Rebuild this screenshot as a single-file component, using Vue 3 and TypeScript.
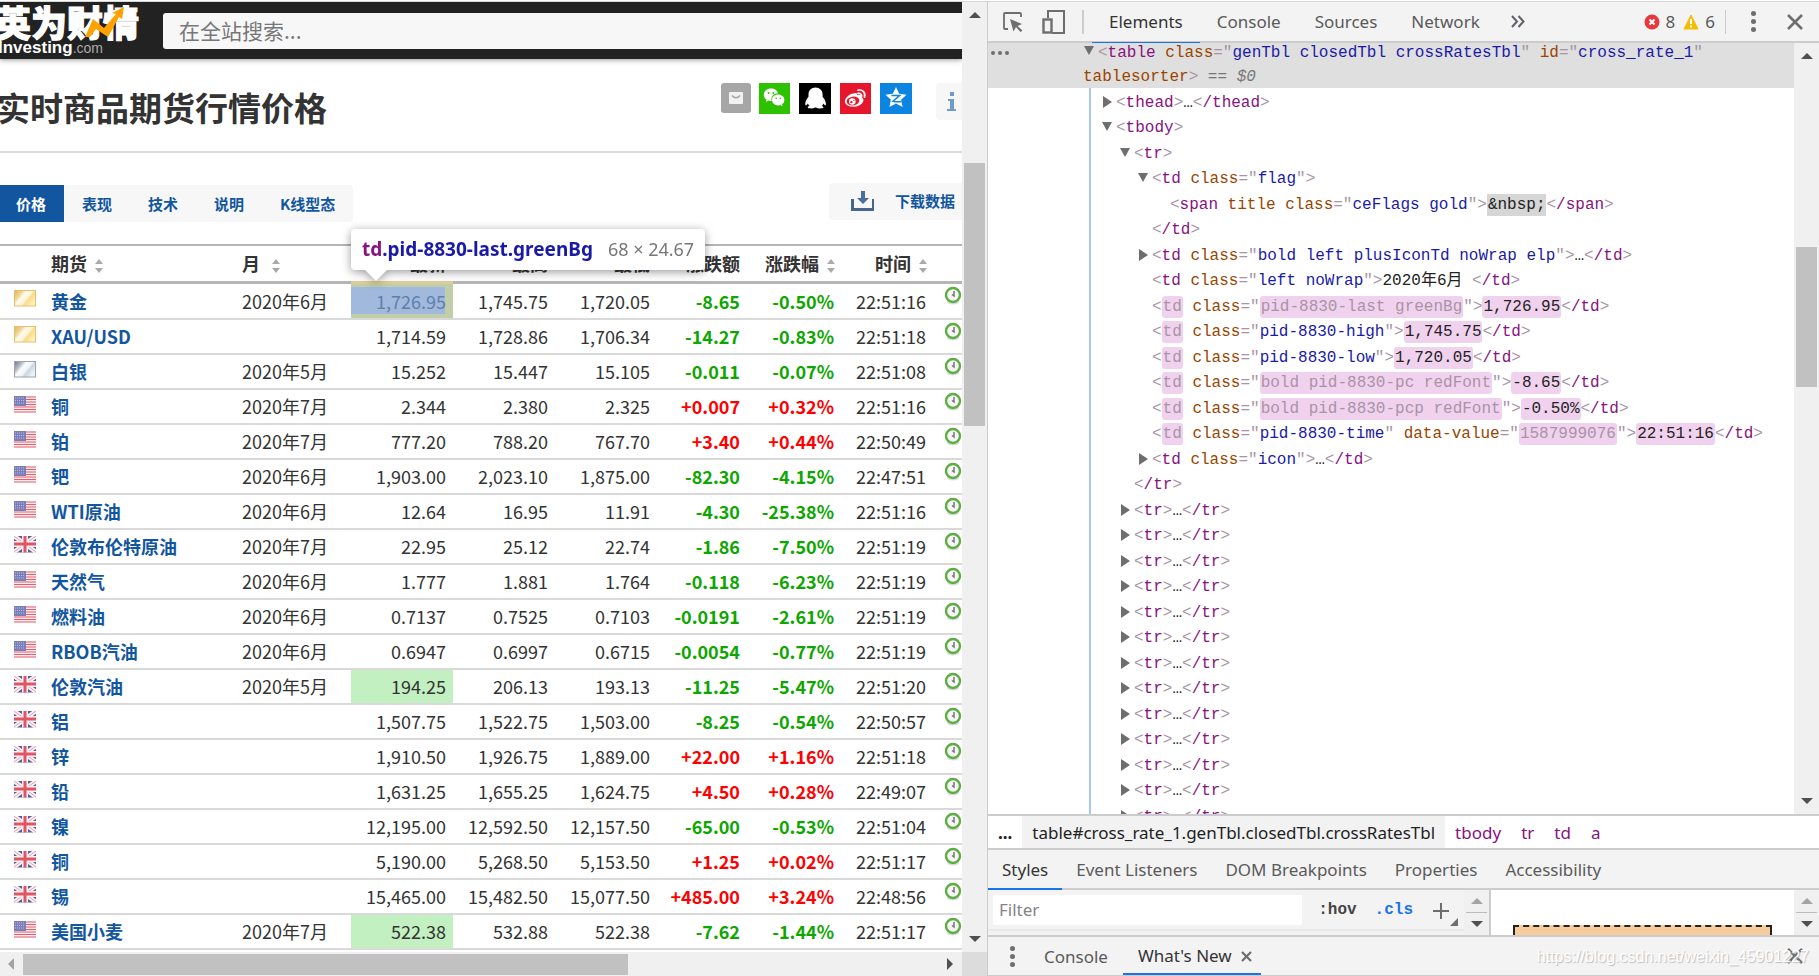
<script setup lang="ts">
interface Quote {
  flag: 'gold' | 'silver' | 'us' | 'uk'
  name: string
  month: string
  last: string
  high: string
  low: string
  chg: string
  pct: string
  time: string
  state?: 'inspected' | 'flash'
}

const q = (
  flag: Quote['flag'], name: string, month: string, last: string, high: string,
  low: string, chg: string, pct: string, time: string, state?: Quote['state'],
): Quote => ({ flag, name, month, last, high, low, chg, pct, time, state })

const quotes: Quote[] = [
  q('gold', '黄金', '2020年6月', '1,726.95', '1,745.75', '1,720.05', '-8.65', '-0.50%', '22:51:16', 'inspected'),
  q('gold', 'XAU/USD', '', '1,714.59', '1,728.86', '1,706.34', '-14.27', '-0.83%', '22:51:18'),
  q('silver', '白银', '2020年5月', '15.252', '15.447', '15.105', '-0.011', '-0.07%', '22:51:08'),
  q('us', '铜', '2020年7月', '2.344', '2.380', '2.325', '+0.007', '+0.32%', '22:51:16'),
  q('us', '铂', '2020年7月', '777.20', '788.20', '767.70', '+3.40', '+0.44%', '22:50:49'),
  q('us', '钯', '2020年6月', '1,903.00', '2,023.10', '1,875.00', '-82.30', '-4.15%', '22:47:51'),
  q('us', 'WTI原油', '2020年6月', '12.64', '16.95', '11.91', '-4.30', '-25.38%', '22:51:16'),
  q('uk', '伦敦布伦特原油', '2020年7月', '22.95', '25.12', '22.74', '-1.86', '-7.50%', '22:51:19'),
  q('us', '天然气', '2020年6月', '1.777', '1.881', '1.764', '-0.118', '-6.23%', '22:51:19'),
  q('us', '燃料油', '2020年6月', '0.7137', '0.7525', '0.7103', '-0.0191', '-2.61%', '22:51:19'),
  q('us', 'RBOB汽油', '2020年6月', '0.6947', '0.6997', '0.6715', '-0.0054', '-0.77%', '22:51:19'),
  q('uk', '伦敦汽油', '2020年5月', '194.25', '206.13', '193.13', '-11.25', '-5.47%', '22:51:20', 'flash'),
  q('uk', '铝', '', '1,507.75', '1,522.75', '1,503.00', '-8.25', '-0.54%', '22:50:57'),
  q('uk', '锌', '', '1,910.50', '1,926.75', '1,889.00', '+22.00', '+1.16%', '22:51:18'),
  q('uk', '铅', '', '1,631.25', '1,655.25', '1,624.75', '+4.50', '+0.28%', '22:49:07'),
  q('uk', '镍', '', '12,195.00', '12,592.50', '12,157.50', '-65.00', '-0.53%', '22:51:04'),
  q('uk', '铜', '', '5,190.00', '5,268.50', '5,153.50', '+1.25', '+0.02%', '22:51:17'),
  q('uk', '锡', '', '15,465.00', '15,482.50', '15,077.50', '+485.00', '+3.24%', '22:48:56'),
  q('us', '美国小麦', '2020年7月', '522.38', '532.88', '522.38', '-7.62', '-1.44%', '22:51:17', 'flash'),
]

const trend = (v: string) => (v.startsWith('+') ? 'up' : 'down')

/* Token kinds: p punctuation, t tag, a attribute, v value, x text,
   ht / hv / hx the same kinds flashed after a DOM mutation, s selected text */
type Token = [kind: string, text: string]
interface TreeRow {
  depth: number
  arrow?: 'open' | 'closed'
  tokens: Token[]
}

const close = (tag: string): Token[] => [['p', '<'], ['t', '/' + tag], ['p', '>']]
const attr = (name: string, value: string, kind = 'v'): Token[] => [
  ['a', ' ' + name], ['p', '="'], [kind, value], ['p', '"'],
]
const folded = (depth: number, tag: string, attrs: Token[] = []): TreeRow => ({
  depth, arrow: 'closed', tokens: [['p', '<'], ['t', tag], ...attrs, ['p', '>'], ['x', '…'], ...close(tag)],
})
const cell = (cls: string, clsKind: string, text: string, extra: Token[] = []): TreeRow => ({
  depth: 3,
  tokens: [['p', '<'], ['ht', 'td'], ...attr('class', cls, clsKind), ...extra, ['p', '>'], ['hx', text], ...close('td')],
})

const tree: TreeRow[] = [
  folded(1, 'thead'),
  { depth: 1, arrow: 'open', tokens: [['p', '<'], ['t', 'tbody'], ['p', '>']] },
  { depth: 2, arrow: 'open', tokens: [['p', '<'], ['t', 'tr'], ['p', '>']] },
  { depth: 3, arrow: 'open', tokens: [['p', '<'], ['t', 'td'], ...attr('class', 'flag'), ['p', '>']] },
  {
    depth: 4,
    tokens: [['p', '<'], ['t', 'span'], ['a', ' title'], ...attr('class', 'ceFlags gold'), ['p', '>'], ['s', '&nbsp;'], ...close('span')],
  },
  { depth: 3, tokens: close('td') },
  folded(3, 'td', attr('class', 'bold left plusIconTd noWrap elp')),
  { depth: 3, tokens: [['p', '<'], ['t', 'td'], ...attr('class', 'left noWrap'), ['p', '>'], ['x', '2020年6月 '], ...close('td')] },
  cell('pid-8830-last greenBg', 'hv', '1,726.95'),
  cell('pid-8830-high', 'v', '1,745.75'),
  cell('pid-8830-low', 'v', '1,720.05'),
  cell('bold pid-8830-pc redFont', 'hv', '-8.65'),
  cell('bold pid-8830-pcp redFont', 'hv', '-0.50%'),
  cell('pid-8830-time', 'v', '22:51:16', attr('data-value', '1587999076', 'hv')),
  folded(3, 'td', attr('class', 'icon')),
  { depth: 2, tokens: close('tr') },
  ...Array.from({ length: 13 }, () => folded(2, 'tr')),
]

const siteTabs = ['价格', '表现', '技术', '说明', 'K线型态']
const toolTabs = ['Elements', 'Console', 'Sources', 'Network']
const paneTabs = ['Styles', 'Event Listeners', 'DOM Breakpoints', 'Properties', 'Accessibility']
</script>

<template>
  <div class="window">
    <section class="site">
      <div class="viewport">
        <header class="topbar">
          <a href="#" class="logo">
            <span class="logo-cn">英为财情</span>
            <span class="logo-en">Investing<small>.com</small></span>
            <svg class="logo-arrow" width="40" height="34" viewBox="0 0 40 34" aria-hidden="true">
              <path d="M0 30 8 12 19 21 31 7 27 6 39 0 37 12 34 10 23 30 11 22 5 30Z" fill="#ffa200" />
            </svg>
          </a>
          <input class="search" type="text" aria-label="搜索" placeholder="在全站搜索..." />
        </header>

        <div class="title-row">
          <h1>实时商品期货行情价格</h1>
          <div class="share">
            <button class="mail" aria-label="邮件">
              <svg width="30" height="30" viewBox="0 0 30 30">
                <rect x="8" y="9" width="14" height="12" rx="1" fill="#f1f1f1" />
                <path d="M11 12.500q4 4.500 8 0" fill="none" stroke="#a6a6a6" stroke-width="1.600" />
              </svg>
            </button>
            <button class="wechat" aria-label="微信">
              <svg width="31" height="31" viewBox="0 0 31 31" fill="#fff">
                <path d="M12 5.500c-4 0-7.200 2.700-7.200 6.200 0 2 1 3.700 2.700 4.900L6.900 19l2.700-1.400c1 .3 2.200.4 3 .3-1-4.600 2.500-7.700 6.400-7.700C18.400 7.500 15.500 5.500 12 5.500Z" />
                <path d="M19.200 11.600c-3.500 0-6.200 2.400-6.200 5.400s2.700 5.400 6.200 5.400c.8 0 1.500-.1 2.200-.3l2.100 1.200-.5-2c1.500-1 2.400-2.500 2.400-4.300 0-3-2.800-5.400-6.200-5.400Z" />
                <g fill="#2dc100"><circle cx="9.600" cy="10" r="1" /><circle cx="14.400" cy="10" r="1" /><circle cx="17.200" cy="15.200" r=".8" /><circle cx="21.200" cy="15.200" r=".8" /></g>
              </svg>
            </button>
            <button class="qq" aria-label="QQ">
              <svg width="32" height="31" viewBox="0 0 32 31" fill="#fff">
                <path d="M16.500 4.500c-4.200 0-7 3-7 7v2.300c-1.800 2.300-3.700 5-3.200 8.300.5.700 1.700-.2 2.600-1.600.3 1 .8 1.700 1.500 2.400-2 .5-2.200 2.200 0 2.400 2.300.3 4.300 0 5.600-.9h1.200c1.300.9 3.500 1.200 5.700.9 2.100-.2 1.900-1.900 0-2.400.7-.7 1.200-1.500 1.500-2.400.9 1.400 2 2.300 2.500 1.600.4-3.300-1.400-6-3.300-8.300v-2.300c0-4-2.900-7-7.100-7Z" />
              </svg>
            </button>
            <button class="weibo" aria-label="微博">
              <svg width="31" height="31" viewBox="0 0 31 31" fill="none">
                <path d="M13.500 10.500c2-1 4-.8 3.500 1.700 3-1 5.200-.3 4.300 2 5 2 .8 9.500-7.700 9.500-9 0-11.400-6-5.600-10.700 1.500-1.300 3.500-2.300 5.500-2.500Z" fill="#fff" />
                <ellipse cx="13" cy="18" rx="6.400" ry="4.400" fill="#e6162d" transform="rotate(-8 13 18)" />
                <circle cx="12.300" cy="18.500" r="3.300" fill="#fff" />
                <circle cx="11.400" cy="19.100" r="1.200" fill="#e6162d" />
                <circle cx="13.800" cy="17.600" r=".6" fill="#e6162d" />
                <path d="M18 10.400c2.400-.6 4.200 1.100 3.500 3.500M18 7.200c4.600-1 7.800 2.500 6.500 7" stroke="#fff" stroke-width="1.700" stroke-linecap="round" />
              </svg>
            </button>
            <button class="qzone" aria-label="QQ空间">
              <svg width="32" height="31" viewBox="0 0 32 31">
                <path d="m16 4 3.200 6.800 7.300.9-5.400 5 1.500 7.300-6.600-3.500L9.400 24l1.500-7.300-5.400-5 7.300-.9Z" fill="#fff" />
                <path d="M11.500 12.500h8.200l-6.700 5.700c2.700.7 5.300.8 8.500.3" fill="none" stroke="#0b85df" stroke-width="1.500" />
              </svg>
            </button>
          </div>
          <button class="info" aria-label="信息">
            <svg width="10" height="20" viewBox="0 0 10 20" fill="#6f9acb">
              <rect x="3" width="4" height="4" /><path d="M1 7h6v10h2v2H0v-2h3V9H1Z" />
            </svg>
          </button>
        </div>

        <div class="tab-row">
          <nav class="site-tabs">
            <a v-for="(tab, i) in siteTabs" :key="tab" href="#" :class="{ on: i === 0 }">{{ tab }}</a>
          </nav>
          <button class="download">
            <svg width="24" height="20" viewBox="0 0 24 20" fill="#4a6f9c">
              <path d="M10 0h4v7h4l-6 6-6-6h4Z" />
              <path d="M0 8h3v9h18V8h2v12H0Z" fill="#44658c" />
            </svg>
            下载数据
          </button>
        </div>

        <div class="table-area">
          <table>
            <colgroup>
              <col class="c-flag" /><col /><col class="c-month" /><col class="c-num" /><col class="c-num" />
              <col class="c-num" /><col class="c-chg" /><col class="c-pct" /><col class="c-time" /><col class="c-icon" />
            </colgroup>
            <thead>
              <tr>
                <th></th>
                <th class="l">期货<i class="sort"></i></th>
                <th class="l">月<i class="sort wide"></i></th>
                <th>最新</th>
                <th>最高</th>
                <th>最低</th>
                <th>涨跌额</th>
                <th>涨跌幅<i class="sort"></i></th>
                <th>时间<i class="sort"></i></th>
                <th></th>
              </tr>
            </thead>
            <tbody>
              <tr v-for="(r, i) in quotes" :key="i">
                <td class="flag">
                  <svg v-if="r.flag === 'us'" width="22" height="17" viewBox="0 0 22 17">
                    <rect width="22" height="16.500" fill="#fbeaec" />
                    <path d="M0 1h22M0 3.500h22M0 6h22M0 8.500h22M0 11h22M0 13.500h22M0 16h22" stroke="#e2606e" stroke-width="1.200" />
                    <rect width="12" height="10" fill="#7a7fba" />
                    <path d="M1 2h10M1 4.500h10M1 7h10" stroke="#b9bce0" stroke-dasharray="1 1" />
                  </svg>
                  <svg v-else-if="r.flag === 'uk'" width="22" height="17" viewBox="0 0 22 17">
                    <rect width="22" height="16.500" rx="1" fill="#565b96" />
                    <path d="m0 0 22 16M22 0 0 16" stroke="#f8f1f4" stroke-width="4.500" />
                    <path d="m0 0 22 16M22 0 0 16" stroke="#eaa0aa" stroke-width="1" />
                    <path d="M11 0v16.500M0 8h22" stroke="#fdf1f3" stroke-width="6" />
                    <path d="M11 0v16.500M0 8h22" stroke="#df5564" stroke-width="3" />
                  </svg>
                  <svg v-else width="22" height="17" viewBox="0 0 22 17">
                    <defs>
                      <linearGradient id="gold" x2="1" y2=".6">
                        <stop offset="0" stop-color="#dfb64d" /><stop offset=".3" stop-color="#efd795" /><stop offset=".45" stop-color="#fffaf0" />
                        <stop offset=".65" stop-color="#fff4d4" /><stop offset=".75" stop-color="#f8dc8d" /><stop offset="1" stop-color="#ffefb8" />
                      </linearGradient>
                      <linearGradient id="silver" x2="1" y2=".6">
                        <stop offset="0" stop-color="#6c7584" /><stop offset=".3" stop-color="#b9bfc8" /><stop offset=".45" stop-color="#fafbfc" />
                        <stop offset=".65" stop-color="#f1f4f8" /><stop offset=".75" stop-color="#cbd5e2" /><stop offset="1" stop-color="#eef2f7" />
                      </linearGradient>
                    </defs>
                    <rect x=".5" y=".5" width="21" height="15.500" :fill="`url(#${r.flag})`" :stroke="r.flag === 'gold' ? '#e3c069' : '#9aa3af'" />
                  </svg>
                </td>
                <td class="name"><a href="#">{{ r.name }}</a></td>
                <td class="l">{{ r.month }}</td>
                <td :class="r.state"><span>{{ r.last }}</span></td>
                <td>{{ r.high }}</td>
                <td>{{ r.low }}</td>
                <td :class="['b', trend(r.chg)]">{{ r.chg }}</td>
                <td :class="['b', trend(r.pct)]">{{ r.pct }}</td>
                <td>{{ r.time }}</td>
                <td class="clock">
                  <svg width="18" height="19" viewBox="0 0 18 19">
                    <ellipse cx="9" cy="16" rx="6" ry="2.500" fill="#dcdcdc" />
                    <circle cx="9" cy="9" r="7" fill="#f6f6f6" stroke="#5cad42" stroke-width="2.400" />
                    <path d="M10 5v5L8 8.500" fill="none" stroke="#777" stroke-width="1.500" />
                  </svg>
                </td>
              </tr>
            </tbody>
          </table>
          <div class="tip">
            <b><em>td</em>.pid-8830-last.greenBg</b>
            <span>68 × 24.67</span>
          </div>
        </div>
      </div>
      <div class="vbar"><i class="tri up"></i><i class="thumb"></i><i class="tri dn"></i></div>
      <div class="hbar"><i class="tri lf"></i><i class="thumb"></i><i class="tri rt"></i></div>
      <div class="corner"></div>
    </section>

    <section class="dev">
      <header class="toolbar">
        <button aria-label="Inspect">
          <svg width="20" height="20" viewBox="0 0 20 20">
            <path d="M18 5V2q0-1-1-1H2Q1 1 1 2v14q0 1 1 1h3" fill="none" stroke="#6e6e6e" stroke-width="1.800" />
            <path d="M7 7l12 5-4.500 2 5 4.500-2 1.500-4.500-5-2.500 4.500Z" fill="#6e6e6e" />
          </svg>
        </button>
        <button aria-label="Device toolbar">
          <svg width="24" height="24" viewBox="0 0 24 24" fill="none" stroke="#6e6e6e">
            <path d="M6 8V1h16v22H10" stroke-width="2" /><rect x="1.500" y="9.500" width="8" height="13" stroke-width="2.400" />
          </svg>
        </button>
        <i class="sep"></i>
        <nav>
          <button v-for="(t, i) in toolTabs" :key="t" :class="{ on: i === 0 }">{{ t }}</button>
        </nav>
        <button class="more" aria-label="More tabs">
          <svg width="14" height="13" viewBox="0 0 14 13" fill="none" stroke="#5f6368" stroke-width="2"><path d="m1 1 5 5.500L1 12M7.500 1l5 5.500-5 5.500" /></svg>
        </button>
        <div class="counts">
          <svg width="16" height="16" viewBox="0 0 16 16"><circle cx="8" cy="8" r="7.500" fill="#e8383d" /><path d="m5.500 5.500 5 5m0-5-5 5" stroke="#fff" stroke-width="2" /></svg>
          <span>8</span>
          <svg width="16" height="16" viewBox="0 0 16 16"><path d="M8 1 15 15H1Z" fill="#f4bd00" stroke="#f4bd00" stroke-linejoin="round" /><path d="M8 5v5M8 11.500v2" stroke="#fff" stroke-width="2" /></svg>
          <span>6</span>
        </div>
        <i class="sep thin"></i>
        <button class="dots" aria-label="Menu"><i></i><i></i><i></i></button>
        <button aria-label="Close">
          <svg width="16" height="16" viewBox="0 0 16 16" stroke="#6e6e6e" stroke-width="2.600"><path d="m1 1 14 14M15 1 1 15" /></svg>
        </button>
      </header>

      <div class="elements">
        <div class="tree">
          <div class="selected">
            <div class="line first">
              <button class="dots flat" aria-label="Actions"><i></i><i></i><i></i></button>
              <span class="marker open"></span>
              <code><span class="p">&lt;</span><span class="t">table</span><span class="a"> class</span><span class="p">="</span><span class="v">genTbl closedTbl crossRatesTbl</span><span class="p">"</span><span class="a"> id</span><span class="p">="</span><span class="v">cross_rate_1</span><span class="p">"</span></code>
            </div>
            <div class="line second">
              <code><span class="a">tablesorter</span><span class="p">&gt;</span><span class="eq"> == <i>$0</i></span></code>
            </div>
          </div>
          <div class="children">
            <div v-for="(row, i) in tree" :key="i" class="line" :style="{ '--depth': row.depth - 1 }">
              <span class="marker" :class="row.arrow"></span>
              <code><span v-for="(tok, k) in row.tokens" :key="k" :class="tok[0]">{{ tok[1] }}</span></code>
            </div>
          </div>
        </div>
        <div class="vbar"><i class="tri up"></i><i class="thumb"></i><i class="tri dn"></i></div>
      </div>

      <nav class="crumbs">
        <a href="#" class="dark"><b>...</b></a>
        <a href="#" class="dark cur">table#cross_rate_1.genTbl.closedTbl.crossRatesTbl</a>
        <a href="#">tbody</a><a href="#">tr</a><a href="#">td</a><a href="#">a</a>
      </nav>

      <nav class="pane-tabs">
        <button v-for="(t, i) in paneTabs" :key="t" :class="{ on: i === 0 }">{{ t }}</button>
      </nav>

      <div class="styles">
        <div class="filter">
          <input type="text" aria-label="Filter" placeholder="Filter" />
          <button class="hov">:hov</button>
          <button class="cls">.cls</button>
          <button class="plus" aria-label="New rule">
            <svg width="26" height="26" viewBox="0 0 26 26"><path d="M9 3v16M1 11h16" stroke="#6e6e6e" stroke-width="2" /><path d="M26 18v8h-8Z" fill="#6e6e6e" /></svg>
          </button>
        </div>
        <div class="mini"><i class="tri up"></i><hr /><i class="tri dn"></i></div>
        <div class="model"><div class="margin-box"></div></div>
        <div class="mini"><i class="tri up"></i><hr /><i class="tri dn"></i></div>
      </div>

      <footer class="drawer">
        <button class="dots" aria-label="Drawer menu"><i></i><i></i><i></i></button>
        <button class="tab">Console</button>
        <button class="tab on">
          What's New
          <svg width="11" height="11" viewBox="0 0 11 11" stroke="#6e6e6e" stroke-width="2.200"><path d="m1 1 9 9m0-9-9 9" /></svg>
        </button>
        <button class="close" aria-label="Close drawer">
          <svg width="16" height="16" viewBox="0 0 16 16" stroke="#6e6e6e" stroke-width="2.600"><path d="m1 1 14 14M15 1 1 15" /></svg>
        </button>
        <span class="watermark">https://blog.csdn.net/weixin_45901227</span>
      </footer>
    </section>
  </div>
</template>

<style>
html,
body {
  margin: 0;
  background: #fff;
  overflow: hidden;
}
</style>

<style scoped>
* {
  box-sizing: border-box;
}
button {
  display: flex;
  align-items: center;
  margin: 0;
  padding: 0;
  border: 0;
  background: none;
  color: inherit;
  font: inherit;
}
input {
  border: 0;
  outline: 0;
  min-width: 0;
}
a {
  color: inherit;
  text-decoration: none;
}
svg {
  display: block;
  flex: none;
}
.window {
  display: grid;
  grid-template-columns: minmax(0, 987fr) minmax(0, 832fr);
  grid-template-rows: minmax(0, 1fr);
  height: 100vh;
  padding-top: 1px;
}

/* site */
.site {
  display: grid;
  grid-template-columns: minmax(0, 1fr) 25px;
  grid-template-rows: minmax(0, 1fr) 24px;
  border-top: 1px solid #d6d6d6;
  color: #333;
  font: 18px/33px 'Noto Sans CJK SC', sans-serif;
}
.viewport {
  overflow: hidden;
}
.topbar {
  display: flex;
  align-items: center;
  height: 57px;
  background: #222;
  box-shadow: 0 1px 5px rgba(0, 0, 0, 0.4);
}
.logo {
  position: relative;
  flex: none;
  width: 163px;
  height: 57px;
  color: #fff;
}
.logo-cn {
  display: block;
  margin-left: -5px;
  font-size: 36px;
  font-weight: 900;
  line-height: 38px;
  white-space: nowrap;
  -webkit-text-stroke: 1px #fff;
}
.logo-en {
  display: block;
  margin-left: -2px;
  font: bold 17px/16px 'Liberation Sans', Arial, sans-serif;
}
.logo-en small {
  color: #aaa;
  font-size: 14px;
  font-weight: normal;
}
.logo-arrow {
  position: absolute;
  left: 85px;
  top: 5px;
}
.search {
  flex: 1;
  height: 36px;
  padding: 0 16px 2px;
  border-radius: 3px 0 0 3px;
  background: #f7f7f7;
  font: 21px 'Noto Sans CJK SC', sans-serif;
}
.search::placeholder {
  color: #777;
}
.title-row {
  display: flex;
  align-items: flex-start;
  height: 94px;
  padding-top: 24px;
  border-bottom: 2px solid #d9d9d9;
}
h1 {
  flex: 1;
  margin: 0 0 0 -3px;
  font-size: 33px;
  font-weight: bold;
  line-height: 48px;
  white-space: nowrap;
}
.share {
  display: flex;
  gap: 8px;
  margin-right: 24px;
}
.share button + button {
  height: 31px;
}
.mail {
  height: 30px;
  border-radius: 3px;
  background: #a6a6a6;
}
.wechat {
  background: #2dc100;
  margin-right: 1px;
}
.qq {
  background: #000;
  margin-right: 1px;
}
.weibo {
  background: #e6162d;
  margin-right: 1px;
}
.qzone {
  background: #0b85df;
}
.info {
  width: 26px;
  height: 37px;
  padding-left: 11px;
  border-radius: 4px 0 0 4px;
  background: #f7f7f7;
}
.tab-row {
  display: flex;
  justify-content: space-between;
  height: 91px;
  padding-top: 30px;
  color: #1256a0;
  font-size: 15px;
  font-weight: bold;
  line-height: 37px;
}
.site-tabs {
  display: flex;
  height: 37px;
  margin-top: 2px;
  border-radius: 0 4px 4px 0;
  background: #f7f7f7;
}
.site-tabs a {
  padding: 0 18px;
}
.site-tabs a.on {
  padding: 0 18px 0 16px;
  background: #1256a0;
  color: #fff;
}
.download {
  gap: 20px;
  height: 37px;
  padding: 0 7px 2px 22px;
  border-radius: 4px 0 0 4px;
  background: #f7f7f7;
}
.table-area {
  position: relative;
}
table {
  width: 100%;
  table-layout: fixed;
  border-spacing: 0;
  border-top: 2px solid #b5b5b5;
}
.c-flag {
  width: 51px;
}
.c-month {
  width: 109px;
}
.c-num {
  width: 102px;
}
.c-chg {
  width: 90px;
}
.c-pct {
  width: 94px;
}
.c-time {
  width: 92px;
}
.c-icon {
  width: 29px;
}
th,
td {
  padding: 0 7px 0 0;
  text-align: right;
  white-space: nowrap;
}
th {
  padding-bottom: 1px;
  border-bottom: 3px solid #b5b5b5;
  line-height: 34px;
}
td {
  border-bottom: 2px solid #d9d9d9;
}
tbody tr:first-child td {
  line-height: 34px;
}
.l,
.name {
  padding-right: 0;
  text-align: left;
}
.name {
  color: #1256a0;
  font-weight: bold;
}
.b {
  font-weight: bold;
}
.up {
  color: #f00;
}
.down {
  color: #0ea600;
}
.flag,
.clock {
  padding: 6px 0 0 14px;
  vertical-align: top;
}
.clock {
  padding: 2px 0 0 11px;
}
.flash {
  background: #c3f0c1;
}
.inspected {
  position: relative;
  background: #c2ceaa;
  color: #5f80ab;
}
.inspected span {
  position: relative;
}
.inspected::before {
  content: '';
  position: absolute;
  inset: 3px 8px 4px 0;
  background: #a0b9dd;
}
.inspected::after {
  content: '';
  position: absolute;
  inset: -3px 0 auto 0;
  height: 3px;
  background: #dfcc98;
}
.sort {
  display: inline-grid;
  width: 7px;
  margin-left: 8px;
  row-gap: 4px;
  vertical-align: middle;
}
.sort.wide {
  margin-left: 12px;
}
.sort::before,
.sort::after {
  content: '';
  border: 4px solid transparent;
  border-top: 0;
  border-bottom: 5px solid #aaa;
}
.sort::after {
  border-top: 5px solid #aaa;
  border-bottom: 0;
}
.tip {
  position: absolute;
  left: 351px;
  top: -15px;
  display: flex;
  gap: 15px;
  padding: 0 11px;
  border-radius: 4px;
  background: #fff;
  filter: drop-shadow(0 2px 5px rgba(0, 0, 0, 0.4));
  color: #1a1aa6;
  font: 18px/41px 'Noto Sans', sans-serif;
  white-space: nowrap;
}
.tip::after {
  content: '';
  position: absolute;
  left: 14px;
  top: 41px;
  border: 11px solid transparent;
  border-top-color: #fff;
  border-bottom: 0;
}
.tip b {
  font-size: 19px;
}
.tip em {
  color: #881280;
  font-style: normal;
}
.tip span {
  color: #777;
}

/* scroll bars */
.vbar {
  display: flex;
  flex-direction: column;
  align-items: center;
  width: 25px;
  padding: 10px 0;
  background: #f0f0f0;
}
.vbar .thumb {
  width: 21px;
  height: 263px;
  margin: 145px 0 auto;
  background: #c1c1c1;
}
.hbar {
  display: flex;
  align-items: center;
  padding: 0 9px 0 8px;
  background: #f0f0f0;
}
.hbar .thumb {
  flex: none;
  width: 64%;
  height: 21px;
  margin: 0 auto 0 9px;
  background: #c1c1c1;
}
.corner {
  background: #dcdcdc;
}
.tri {
  flex: none;
  border: 6px solid transparent;
}
.tri.up {
  border-top: 0;
  border-bottom-color: #505050;
}
.tri.dn {
  border-bottom: 0;
  border-top-color: #505050;
}
.tri.lf {
  border-left: 0;
  border-right-color: #a3a3a3;
}
.tri.rt {
  border-right: 0;
  border-left-color: #505050;
}

/* developer tools */
.dev {
  display: flex;
  flex-direction: column;
  border-top: 1px solid #d6d6d6;
  border-left: 1px solid #ccc;
  border-bottom: 1px solid #ccc;
  background: #f3f3f3;
  color: #5a5a5a;
  font: 17px/24px 'Noto Sans', 'Noto Sans CJK SC', sans-serif;
}
.toolbar {
  display: flex;
  align-items: center;
  height: 41px;
  padding: 0 16px 0 15px;
  border-bottom: 2px solid #ccc;
}
.toolbar button + button {
  margin-left: 19px;
}
.toolbar nav {
  display: flex;
  height: 41px;
  margin-left: 8px;
}
.toolbar nav button,
.toolbar nav button + button {
  margin: 0 0 -2px;
  padding: 1px 17px 0;
  border-bottom: 2px solid transparent;
}
.toolbar nav .on {
  border-color: #1a73e8;
  color: #333;
}
.sep {
  width: 2px;
  height: 24px;
  margin-left: 16px;
  background: #ccc;
}
.sep.thin {
  width: 1px;
  margin: 0 25px 0 10px;
}
.more {
  margin-left: 14px;
}
.counts {
  display: flex;
  align-items: center;
  gap: 6px;
  margin-left: auto;
}
.counts span + svg {
  margin-left: 2px;
}
.dots {
  flex-direction: column;
  gap: 3px;
}
.dots i {
  width: 5px;
  height: 5px;
  border-radius: 50%;
  background: #6e6e6e;
}
.toolbar .dots + button {
  margin-left: 31px;
}
.elements {
  display: flex;
  flex: 1;
  min-height: 0;
  background: #fff;
}
.tree {
  flex: 1;
  min-width: 0;
  overflow: hidden;
}
.elements .vbar .thumb {
  height: 140px;
  margin-top: 188px;
}
code {
  color: #222;
  font-family: 'Liberation Mono', 'Noto Sans CJK SC', monospace;
  font-size: 16px;
  white-space: pre;
}
.selected {
  display: flex;
  flex-direction: column;
  justify-content: flex-end;
  height: 45px;
  overflow: hidden;
  background: #dfdfdf;
}
.line {
  display: flex;
  flex: none;
  height: 25px;
  line-height: 25px;
}
.selected .line {
  height: 24px;
  line-height: 26px;
}
.second {
  padding-left: 95px;
}
.flat {
  flex-direction: row;
  width: 94px;
  padding: 1px 0 0 3px;
}
.flat i {
  width: 4px;
  height: 4px;
}
.children {
  margin-left: 101px;
  padding-top: 3px;
  border-left: 2px solid #a8c7f0;
}
.children .line {
  padding-left: calc(9px + var(--depth) * 18px);
}
.children .line:nth-child(even) {
  height: 26px;
}
.marker {
  flex: none;
  width: 16px;
  padding: 6px 0 0 2px;
}
.marker.closed {
  padding: 5px 0 0 3px;
}
.marker::before {
  content: '';
  display: block;
  width: 0;
}
.marker.open::before {
  border: 5px solid transparent;
  border-top: 9px solid #6e6e6e;
  border-bottom: 0;
}
.marker.closed::before {
  border: 6px solid transparent;
  border-left: 9px solid #6e6e6e;
  border-right: 0;
}
.p {
  color: #a894a6;
}
.t {
  color: #881280;
}
.a {
  color: #994500;
}
.v {
  color: #1a1aa6;
}
.eq {
  color: #777;
}
.ht,
.hv,
.hx {
  padding: 2px 1px;
  border-radius: 3px;
  background: #f1d2ee;
  color: #a894a6;
}
.hx {
  color: #222;
}
.s {
  padding: 2px 1px;
  background: #d6d6d6;
}
.crumbs {
  display: flex;
  height: 36px;
  border: solid #ccc;
  border-width: 2px 0;
  background: #fff;
  color: #881280;
  line-height: 33px;
}
.crumbs a {
  padding: 0 10px;
}
.crumbs .dark {
  color: #222;
}
.crumbs .cur {
  background: #f2f2f2;
}
.pane-tabs {
  display: flex;
  height: 40px;
  border-bottom: 2px solid #ccc;
}
.pane-tabs button {
  margin-bottom: -2px;
  padding: 1px 14px 0;
  border-bottom: 2px solid transparent;
}
.pane-tabs .on {
  border-color: #1a73e8;
  color: #333;
}
.styles {
  display: flex;
  height: 47px;
  border-bottom: 2px solid #ccc;
}
.filter {
  display: flex;
  align-items: center;
  width: 476px;
  height: 41px;
  padding-left: 5px;
  border-bottom: 2px solid #e9e9e9;
}
.filter input {
  flex: 1;
  height: 30px;
  padding: 0 6px;
  background: #fff;
  font: 17px 'Noto Sans', sans-serif;
}
.filter input::placeholder {
  color: #858585;
}
.hov,
.cls {
  margin-left: 16px;
  color: #444;
  font: bold 16px 'Liberation Mono', monospace;
}
.cls {
  margin-left: 18px;
  color: #1a73e8;
}
.plus {
  margin: 6px 6px 0 19px;
}
.mini {
  display: flex;
  flex-direction: column;
  align-items: center;
  justify-content: center;
  width: 25px;
  background: #f0f0f0;
}
.mini hr {
  width: 21px;
  margin: 8px 0;
  border: 0;
  border-top: 1px solid #bbb;
}
.mini .tri.up {
  border-bottom-color: #a3a3a3;
}
.model {
  flex: 1;
  padding: 35px 22px 0;
  border-left: 2px solid #ccc;
  background: #fff;
}
.margin-box {
  height: 10px;
  border: 2px dashed #222;
  border-bottom: 0;
  background: #f8cb9c;
}
.drawer {
  position: relative;
  display: flex;
  align-items: center;
  height: 38px;
  padding: 0 16px 0 22px;
}
.drawer .tab {
  height: 38px;
  padding: 2px 15px 0;
  gap: 9px;
}
.drawer .dots {
  margin-right: 14px;
}
.drawer .on {
  padding: 2px 9px 0 15px;
  border-bottom: 2px solid #1a73e8;
  color: #333;
}
.close {
  margin-left: auto;
}
.watermark {
  position: absolute;
  right: 10px;
  top: 8px;
  color: #fff;
  font: 16px/24px 'Liberation Sans', Arial, sans-serif;
  text-shadow: 1px 1px 1px #bbb;
}
</style>
